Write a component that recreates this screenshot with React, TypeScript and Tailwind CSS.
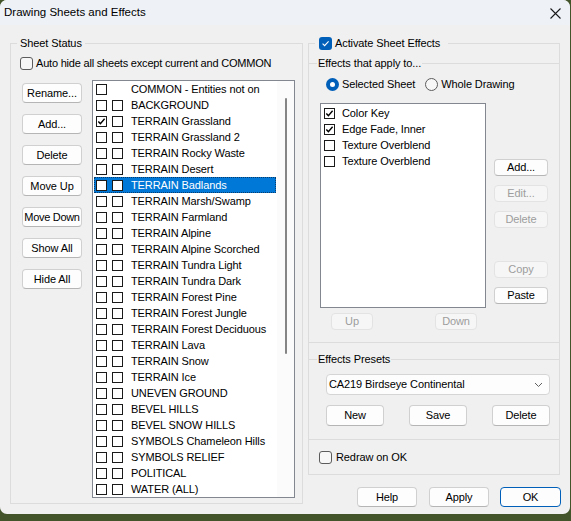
import React from 'react';

type Kids = { children?: React.ReactNode; className?: string };

function ClassicBox({ checked }: { checked?: boolean }) {
  return (
    <span className="flex h-[11px] w-[11px] shrink-0 items-center justify-center border border-[#1a1a1a] bg-white">
      {checked && (
        <svg width="9" height="9" viewBox="0 0 9 9">
          <path d="M1.3 4.4 L3.4 6.6 L7.6 1.8" fill="none" stroke="#000" strokeWidth="1.4" />
        </svg>
      )}
    </span>
  );
}

function WinCheck({ checked }: { checked?: boolean }) {
  return checked ? (
    <span className="flex h-[13px] w-[13px] shrink-0 items-center justify-center rounded-[3px] bg-[#005fb8]">
      <svg width="9" height="9" viewBox="0 0 9 9">
        <path d="M1.6 4.7 L3.6 6.6 L7.6 2.4" fill="none" stroke="#fff" strokeWidth="1.1" />
      </svg>
    </span>
  ) : (
    <span className="h-[13px] w-[13px] shrink-0 rounded-[3px] border border-[#5c5c5c] bg-[#f7f7f7]" />
  );
}

function Radio({ on }: { on?: boolean }) {
  return on ? (
    <span className="flex h-[13px] w-[13px] shrink-0 items-center justify-center rounded-full bg-[#005fb8]">
      <span className="h-[5px] w-[5px] rounded-full bg-white" />
    </span>
  ) : (
    <span className="h-[13px] w-[13px] shrink-0 rounded-full border border-[#5c5c5c] bg-[#f7f7f7]" />
  );
}

function Btn({ children, className = '' }: Kids) {
  return (
    <div
      className={`flex shrink-0 items-center justify-center whitespace-nowrap rounded-[4px] border border-[#d0d0d0] border-b-[#b5b5b5] bg-[#fdfdfd] leading-none text-black ${className}`}
    >
      {children}
    </div>
  );
}

function DisBtn({ children, className = '' }: Kids) {
  return (
    <div
      className={`flex shrink-0 items-center justify-center whitespace-nowrap rounded-[4px] border border-[#e3e3e3] bg-[#f6f6f6] leading-none text-[#9d9d9d] ${className}`}
    >
      {children}
    </div>
  );
}

const sheets: { name: string; single?: boolean; checked?: boolean }[] = [
  { name: 'COMMON - Entities not on', single: true },
  { name: 'BACKGROUND' },
  { name: 'TERRAIN Grassland', checked: true },
  { name: 'TERRAIN Grassland 2' },
  { name: 'TERRAIN Rocky Waste' },
  { name: 'TERRAIN Desert' },
  { name: 'TERRAIN Badlands' },
  { name: 'TERRAIN Marsh/Swamp' },
  { name: 'TERRAIN Farmland' },
  { name: 'TERRAIN Alpine' },
  { name: 'TERRAIN Alpine Scorched' },
  { name: 'TERRAIN Tundra Light' },
  { name: 'TERRAIN Tundra Dark' },
  { name: 'TERRAIN Forest Pine' },
  { name: 'TERRAIN Forest Jungle' },
  { name: 'TERRAIN Forest Deciduous' },
  { name: 'TERRAIN Lava' },
  { name: 'TERRAIN Snow' },
  { name: 'TERRAIN Ice' },
  { name: 'UNEVEN GROUND' },
  { name: 'BEVEL HILLS' },
  { name: 'BEVEL SNOW HILLS' },
  { name: 'SYMBOLS Chameleon Hills' },
  { name: 'SYMBOLS RELIEF' },
  { name: 'POLITICAL' },
  { name: 'WATER (ALL)' },
];

const effects = [
  { name: 'Color Key', checked: true },
  { name: 'Edge Fade, Inner', checked: true },
  { name: 'Texture Overblend' },
  { name: 'Texture Overblend' },
];

export default function App() {
  return (
    <div className="h-[521px] w-[571px] overflow-hidden bg-[#43542b] font-['Liberation_Sans',Arial,sans-serif] text-[11px] tracking-[-0.1px] text-black">
      <div className="flex h-[514px] w-[570px] flex-col overflow-hidden rounded-[7px] bg-[#f0f0f0]">
        {/* title bar */}
        <div className="flex h-[25px] shrink-0 items-center justify-between bg-[#eef2f7] pl-[4px] pr-[9px] pt-[1px]">
          <span className="text-[11.5px] leading-none tracking-normal">Drawing Sheets and Effects</span>
          <svg width="11" height="11" viewBox="0 0 11 11">
            <path d="M0.5 0.5 L10.5 10.5 M10.5 0.5 L0.5 10.5" stroke="#1a1a1a" strokeWidth="1.1" />
          </svg>
        </div>

        {/* body */}
        <div className="flex pl-[10px] pt-[18px]">
          {/* Left group */}
          <div className="relative h-[461px] w-[293px] shrink-0 border border-[#dcdcdc]">
            <span className="absolute left-[6px] top-[-8px] bg-[#f0f0f0] px-[3px] leading-[14px]">Sheet Status</span>
            <div className="flex flex-col pl-[9px] pt-[13px]">
              <div className="flex h-[13px] items-center">
                <WinCheck />
                <span className="ml-[3px] leading-none tracking-[-0.2px]">Auto hide all sheets except current and COMMON</span>
              </div>
              <div className="mt-[10px] flex">
                <div className="ml-[2px] flex w-[60px] flex-col gap-[11px] pt-[3px]">
                  <Btn className="h-[20px] w-[60px]">Rename...</Btn>
                  <Btn className="h-[20px] w-[60px]">Add...</Btn>
                  <Btn className="h-[20px] w-[60px]">Delete</Btn>
                  <Btn className="h-[20px] w-[60px]">Move Up</Btn>
                  <Btn className="h-[20px] w-[60px] tracking-[-0.3px]">Move Down</Btn>
                  <Btn className="h-[20px] w-[60px]">Show All</Btn>
                  <Btn className="h-[20px] w-[60px]">Hide All</Btn>
                </div>
                <div className="ml-[10px] flex h-[418px] w-[203px] border border-[#828790] bg-white">
                  <div className="flex w-[184px] flex-col overflow-hidden">
                    {sheets.map((s, i) => {
                      const sel = s.name === 'TERRAIN Badlands';
                      return (
                        <div
                          key={i}
                          className={`ml-[1px] flex h-[16px] w-[182px] shrink-0 items-center pl-[2px] ${
                            sel ? 'bg-[#0078d7] text-white outline outline-1 -outline-offset-1 outline-dotted outline-[#0a3d6b]' : ''
                          }`}
                        >
                          <ClassicBox checked={s.checked} />
                          {s.single ? (
                            <span className="ml-[5px] h-[11px] w-[11px] shrink-0" />
                          ) : (
                            <span className="ml-[5px] flex">
                              <ClassicBox />
                            </span>
                          )}
                          <span className="ml-[8px] whitespace-nowrap leading-none">{s.name}</span>
                        </div>
                      );
                    })}
                  </div>
                  <div className="flex w-[17px] shrink-0 justify-center bg-[#fbfbfb] pt-[17px]">
                    <div className="ml-[1px] h-[256px] w-[2px] rounded-full bg-[#858585]" />
                  </div>
                </div>
              </div>
            </div>
          </div>

          {/* Right column */}
          <div className="ml-[5px] flex flex-col">
            <div className="relative h-[432px] w-[252px] border border-[#dcdcdc]">
              <span className="absolute left-[6px] top-[-8px] flex h-[14px] items-center bg-[#f0f0f0] pl-[4px] pr-[8px]">
                <WinCheck checked />
                <span className="ml-[3px] leading-none">Activate Sheet Effects</span>
              </span>
              <div className="flex flex-col pt-[19px]">
                {/* Effects that apply to */}
                <div className="relative flex h-[280px] flex-col border-y border-[#dcdcdc]">
                  <span className="absolute left-[8px] top-[-8px] bg-[#f0f0f0] px-[1px] leading-[14px]">
                    Effects that apply to...
                  </span>
                  <div className="ml-[17px] mt-[14px] flex h-[13px] items-center">
                    <Radio on />
                    <span className="ml-[3px] leading-none">Selected Sheet</span>
                    <span className="ml-[10px] flex items-center">
                      <Radio />
                      <span className="ml-[3px] leading-none">Whole Drawing</span>
                    </span>
                  </div>
                  <div className="ml-[11px] mt-[12px] flex">
                    <div className="h-[205px] w-[166px] border border-[#828790] bg-white pt-[1px]">
                      {effects.map((e, i) => (
                        <div key={i} className="flex h-[16px] items-center pl-[3px]">
                          <ClassicBox checked={e.checked} />
                          <span className="ml-[7px] leading-none">{e.name}</span>
                        </div>
                      ))}
                    </div>
                    <div className="ml-[8px] flex flex-col pt-[56px]">
                      <Btn className="h-[17px] w-[54px]">Add...</Btn>
                      <DisBtn className="mt-[9px] h-[17px] w-[54px]">Edit...</DisBtn>
                      <DisBtn className="mt-[9px] h-[17px] w-[54px]">Delete</DisBtn>
                      <DisBtn className="mt-[33px] h-[17px] w-[54px]">Copy</DisBtn>
                      <Btn className="mt-[9px] h-[17px] w-[54px]">Paste</Btn>
                    </div>
                  </div>
                  <div className="mt-[5px] flex">
                    <DisBtn className="ml-[22px] h-[17px] w-[42px]">Up</DisBtn>
                    <DisBtn className="ml-[62px] h-[17px] w-[42px]">Down</DisBtn>
                  </div>
                </div>

                {/* Effects Presets */}
                <div className="relative mt-[16px] flex h-[81px] flex-col border-y border-[#dcdcdc]">
                  <span className="absolute left-[8px] top-[-8px] bg-[#f0f0f0] px-[1px] leading-[14px]">
                    Effects Presets
                  </span>
                  <div className="ml-[17px] mt-[14px] flex h-[21px] w-[224px] items-center justify-between rounded-[4px] border border-[#d5d5d5] bg-[#fdfdfd] pl-[2px] pr-[6px]">
                    <span className="leading-none">CA219 Birdseye Continental</span>
                    <svg width="9" height="6" viewBox="0 0 9 6">
                      <path d="M1 1 L4.5 4.5 L8 1" fill="none" stroke="#606060" strokeWidth="1" />
                    </svg>
                  </div>
                  <div className="ml-[17px] mt-[10px] flex w-[224px] justify-between">
                    <Btn className="h-[21px] w-[58px]">New</Btn>
                    <Btn className="h-[21px] w-[58px]">Save</Btn>
                    <Btn className="h-[21px] w-[58px]">Delete</Btn>
                  </div>
                </div>

                <div className="ml-[10px] mt-[11px] flex h-[13px] items-center">
                  <WinCheck />
                  <span className="ml-[4px] leading-none">Redraw on OK</span>
                </div>
              </div>
            </div>

            <div className="mt-[12px] flex">
              <Btn className="ml-[49px] h-[20px] w-[60px]">Help</Btn>
              <Btn className="ml-[12px] h-[20px] w-[60px]">Apply</Btn>
              <div className="ml-[11px] flex h-[20px] w-[61px] items-center justify-center rounded-[4px] border border-[#005fb8] bg-[#fdfdfd] leading-none">
                OK
              </div>
            </div>
          </div>
        </div>
      </div>
    </div>
  );
}
